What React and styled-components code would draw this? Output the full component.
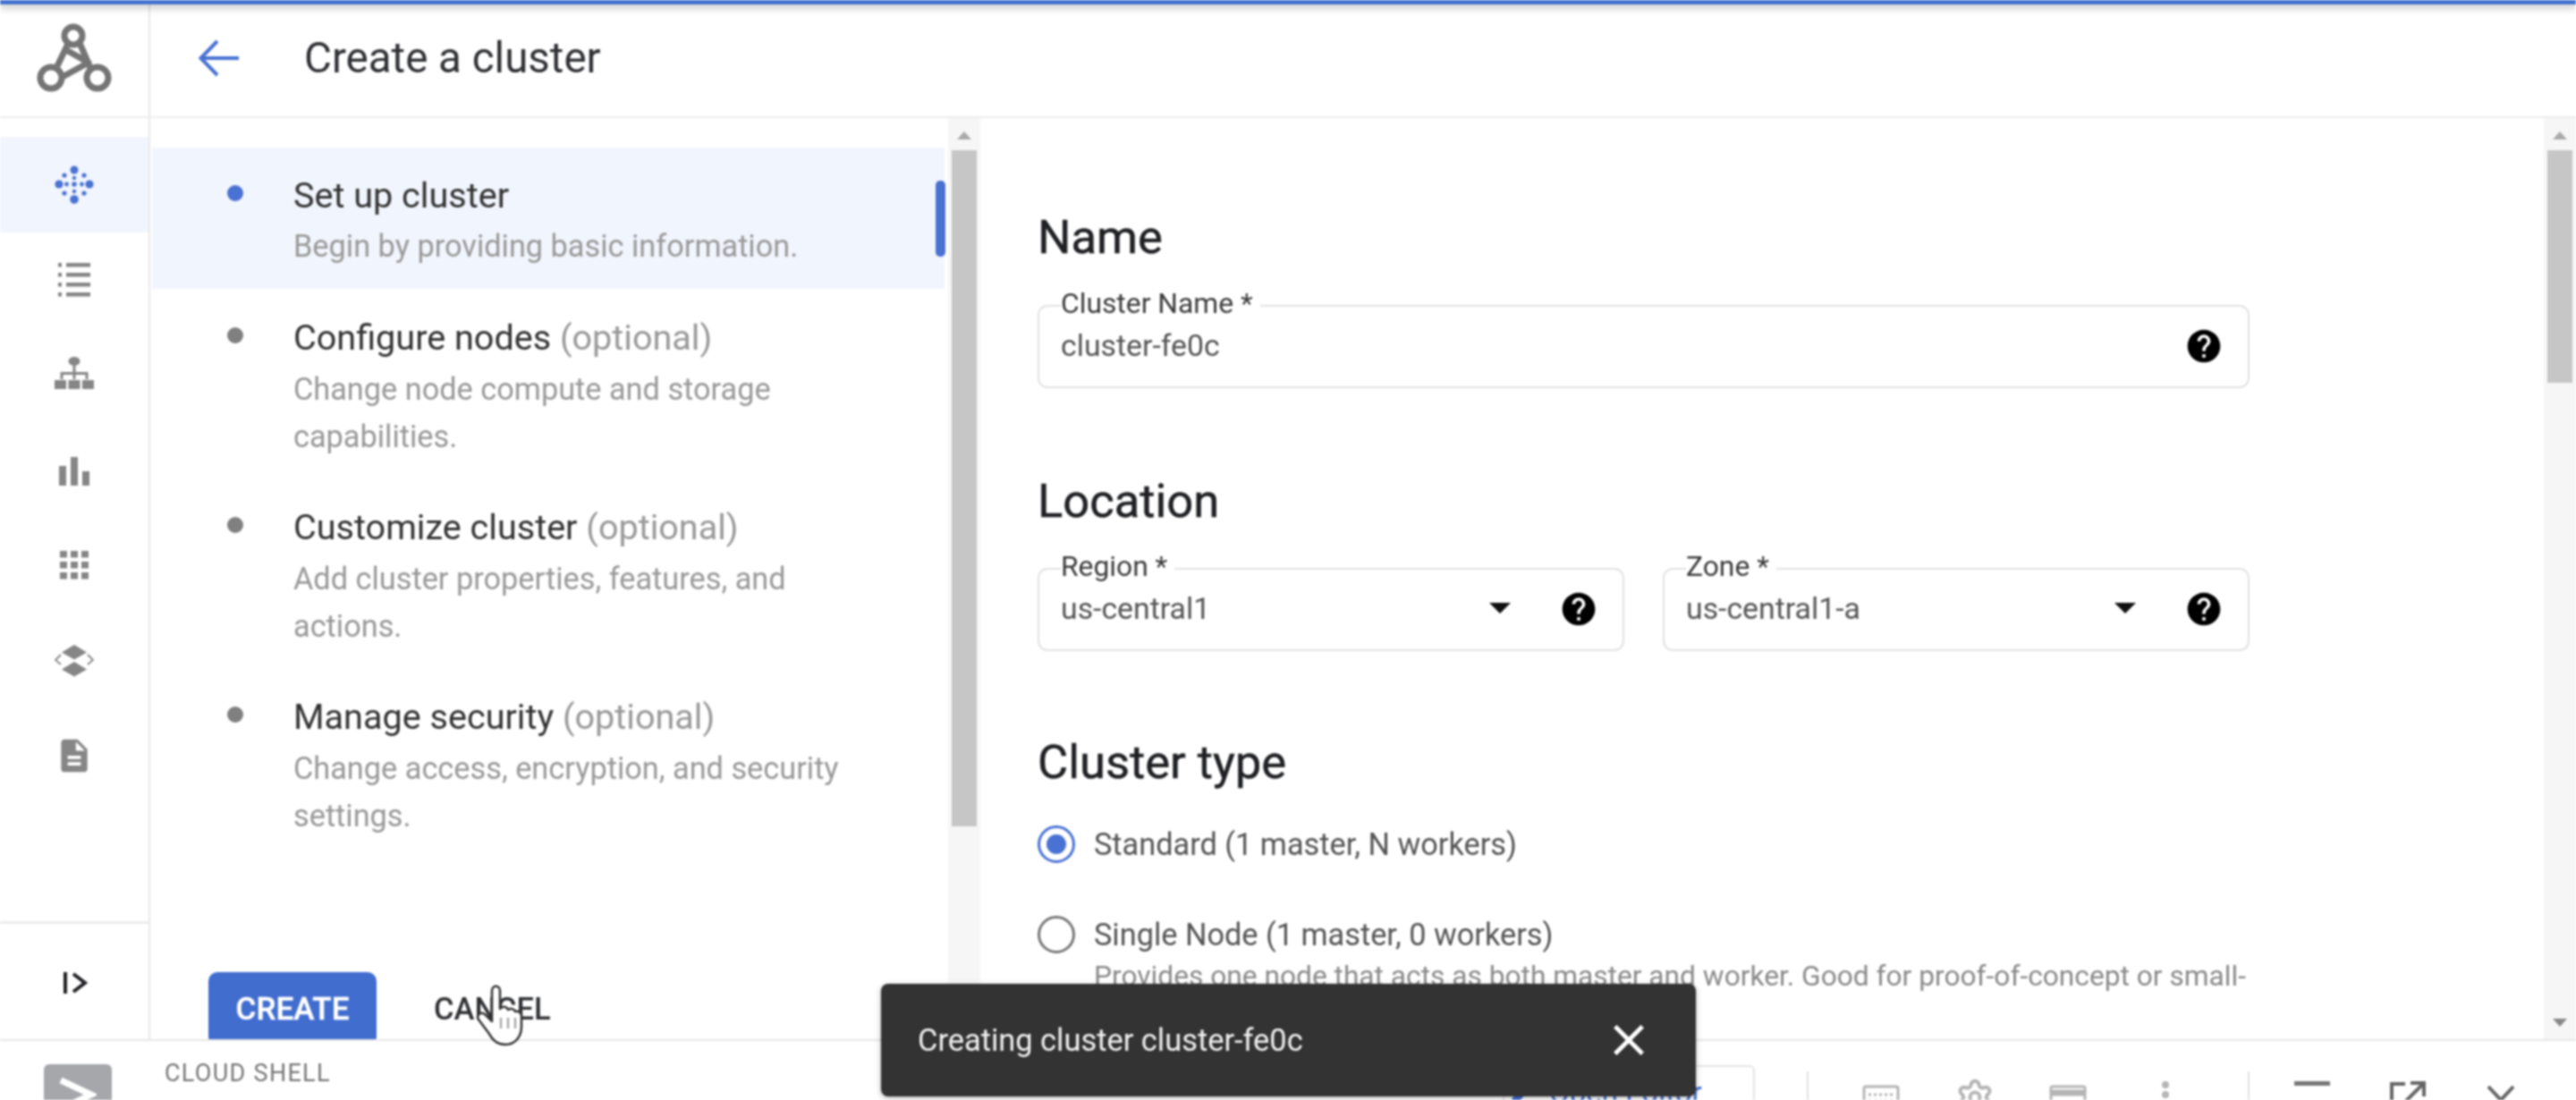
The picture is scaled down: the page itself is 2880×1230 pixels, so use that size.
import React from 'react';
import styled, { createGlobalStyle } from 'styled-components';
import { Settings } from 'lucide-react';

const Global = createGlobalStyle`
  html, body { margin: 0; padding: 0; background: #fff; overflow: hidden; }
  * { box-sizing: border-box; }
`;
const Page = styled.div`
  position: relative; width: 2880px; height: 1230px; overflow: hidden;
  display: flex; flex-direction: column; background: #fff;
  font-family: Roboto, "Liberation Sans", sans-serif; color: #202124;
  filter: blur(0.9px);
`;
const TopLine = styled.div`
  position: absolute; left: 0; right: 0; top: 0; height: 5px; background: #4472d0;
  box-shadow: 0 3px 8px rgba(0,0,0,.32); z-index: 3;
`;
const Header = styled.header`
  flex: none; height: 132px; display: flex; align-items: center; border-bottom: 2px solid #ececec;
`;
const LogoCell = styled.div`
  width: 168px; height: 100%; display: flex; align-items: center; justify-content: center;
  border-right: 2px solid #e8e8e8;
`;
const BackIcon = styled.svg`
  width: 48px; height: 48px; margin-left: 53px; margin-right: 71px; color: #4a72d3;
`;
const Title = styled.h1`
  margin: 0; font-size: 47.5px; font-weight: 400; color: #303134; line-height: 60px;
`;
const Main = styled.main`
  flex: none; height: 1030px; display: flex; overflow: hidden;
`;
const Rail = styled.nav`
  flex: none; width: 168px; border-right: 2px solid #e8e8e8; display: flex; flex-direction: column; padding-top: 21px;
`;
const RailItem = styled.div`
  height: 106.5px; display: flex; align-items: center; justify-content: center;
  color: ${p => (p.$active ? '#4a72d3' : '#868686')};
  background: ${p => (p.$active ? '#f1f5fd' : 'transparent')};
  svg { width: 44px; height: 44px; fill: currentColor; }
`;
const RailFoot = styled.div`
  margin-top: auto; height: 132px; border-top: 3px solid #ececec; display: flex; align-items: center; justify-content: center;
  padding-top: 2px;
  svg { width: 36px; height: 36px; }
`;
const StepsPane = styled.section`
  flex: none; width: 892px; display: flex; flex-direction: column; padding-top: 33px;
`;
const Step = styled.div`
  position: relative; display: flex; min-height: ${p => (p.$active ? 158 : 212)}px;
  padding: ${p => (p.$active ? 32 : 33)}px 20px 0 84px; margin-right: 4px; margin-left: 2px;
  background: ${p => (p.$active ? '#f1f5fd' : 'transparent')};
`;
const Dot = styled.span`
  flex: none; width: 18px; height: 18px; border-radius: 50%; margin-top: 10px; margin-right: 56px;
  background: ${p => (p.$active ? '#4a72d3' : '#808080')};
`;
const StepText = styled.div`min-width: 0; width: 650px;`;
const StepTitle = styled.div`
  font-size: 39.6px; line-height: 44px; color: #333;
`;
const Optional = styled.span`color: #999;`;
const StepSub = styled.div`
  margin-top: ${p => (p.$active ? 8 : 9)}px; font-size: 34.3px; line-height: 53px; color: #999;
`;
const ActiveBar = styled.span`
  position: absolute; right: -1px; top: 37px; width: 11px; height: 85px; border-radius: 5px; background: #4a72d3;
`;
const Actions = styled.div`
  margin-top: auto; height: 75px; overflow: hidden; display: flex; padding-left: 65px; flex: none;
`;
const Primary = styled.button`
  width: 188px; height: 82px; border: 0; border-radius: 10px; background: #416dcf; color: #fff;
  font: 500 35px Roboto, sans-serif; -webkit-text-stroke: .4px #fff;
`;
const Ghost = styled.button`
  margin-left: 64px; height: 82px; border: 0; padding: 0; background: none; color: #303134;
  font: 500 34.5px Roboto, sans-serif;
`;
const Track = styled.div`
  position: relative; flex: none; width: 36px; background: #f6f6f6; padding: 36px 4px 0;
`;
const ArrowUp = styled.span`
  position: absolute; top: 15px; left: 10px; border: 8px solid transparent; border-top: 0; border-bottom: 9px solid #aaa;
`;
const ArrowDown = styled.span`
  position: absolute; bottom: 14px; left: 10px; border: 8px solid transparent; border-bottom: 0; border-top: 9px solid #888;
`;
const Thumb = styled.div`
  height: ${p => p.$h}px; background: #c6c6c6;
`;
const FormPane = styled.section`
  flex: 1; min-width: 0; padding: 103px 0 0 64px; overflow: hidden;
`;
const Form = styled.div`width: 1355px;`;
const Heading = styled.h2`
  margin: ${p => p.$mt || 0}px 0 0; font-size: 52.5px; line-height: 60px; font-weight: 400; color: #202124;
  -webkit-text-stroke: .5px #202124;
`;
const Fields = styled.div`display: flex; gap: 43px; margin-top: 28px;`;
const Field = styled.fieldset`
  flex: 1; margin: ${p => p.$mt || 0}px 0 0; min-width: 0; height: 110px; padding: 0 27px 0 24px;
  border: 2px solid #e2e2e2; border-radius: 11px;
`;
const Legend = styled.legend`
  padding: 0 8px 6px 0; margin-left: 0; font-size: 31.8px; line-height: 30px; color: #3c3c3c;
`;
const FieldRow = styled.div`
  height: 52px; display: flex; align-items: center; font-size: 33.8px; color: #555;
`;
const Value = styled.span`flex: 1;`;
const Caret = styled.span`
  width: 0; height: 0; margin-right: 54px; border: 12px solid transparent; border-bottom: 0; border-top: 12px solid #111;
`;
const Help = styled.svg`width: 44px; height: 44px; fill: #000; flex: none; margin-top: 2px;`;
const RadioRow = styled.div`
  display: flex; align-items: center; height: 50px; margin-top: ${p => p.$mt}px; font-size: 34.3px; color: #555; gap: 21px;
`;
const Radio = styled.span`
  flex: none; width: 42px; height: 42px; border-radius: 50%; display: flex; align-items: center; justify-content: center;
  border: 3px solid ${p => (p.$on ? '#4a72d3' : '#777')};
  &::after { content: ''; width: 22px; height: 22px; border-radius: 50%; background: ${p => (p.$on ? '#4a72d3' : 'transparent')}; }
`;
const Desc = styled.div`
  margin: 0 0 0 63px; font-size: 31.7px; line-height: 44px; color: #8a8a8a; white-space: nowrap;
`;
const Shell = styled.footer`
  flex: none; height: 68px; border-top: 2px solid #e6e6e6; display: flex; overflow: hidden; position: relative;
`;
const ShellBadge = styled.div`
  flex: none; width: 76px; height: 80px; margin: 26px 0 0 49px; border-radius: 6px; background: #a5a7ab;
  display: flex; align-items: flex-start; justify-content: center; padding-top: 14px;
  svg { width: 42px; height: 56px; }
`;
const ShellLabel = styled.div`
  margin: 21px 0 0 59px; font-size: 27px; line-height: 30px; letter-spacing: 1.3px; color: #777;
`;
const ShellTools = styled.div`
  margin-left: auto; display: flex; align-items: flex-start; height: 100%;
`;
const EditorBtn = styled.div`
  width: 282px; height: 90px; margin-top: 27px; border: 2px solid #e4e4e4; border-radius: 6px;
  display: flex; align-items: flex-start; padding: 9px 0 0 4px; gap: 10px; color: #3f6fd0; font-size: 33px; white-space: nowrap;
`;
const VDivider = styled.span`flex: none; width: 2px; height: 60px; margin-top: 34px; background: #e2e2e2; margin-left: ${p => p.$ml}px;`;
const ToolIcon = styled.span`
  flex: none; width: 44px; height: 44px; margin-top: ${p => p.$mt}px; margin-left: ${p => p.$ml}px; color: ${p => p.$c || '#b5b5b5'};
  svg { width: 44px; height: 44px; display: block; }
`;
const Snackbar = styled.div`
  position: absolute; left: 985px; top: 1100px; width: 911px; height: 126px; border-radius: 8px; background: #333;
  color: #f1f1f1; font-size: 34.4px; display: flex; align-items: center; justify-content: space-between; padding: 0 46px 0 41px; z-index: 4;
  box-shadow: 0 2px 6px rgba(0,0,0,.3);
  svg { width: 58px; height: 58px; fill: #fff; }
`;
const Cursor = styled.svg`
  position: absolute; left: 526px; top: 1098px; width: 64px; height: 74px; z-index: 3;
`;

const HelpI = () => (
  <Help viewBox="0 0 24 24"><path d="M12 2C6.48 2 2 6.48 2 12s4.48 10 10 10 10-4.48 10-10S17.52 2 12 2zm1 17h-2v-2h2v2zm2.07-7.75l-.9.92C13.45 12.9 13 13.5 13 15h-2v-.5c0-1.1.45-2.1 1.17-2.83l1.24-1.26c.37-.36.59-.86.59-1.41 0-1.1-.9-2-2-2s-2 .9-2 2H8c0-2.21 1.79-4 4-4s4 1.79 4 4c0 .88-.36 1.68-.93 2.25z" /></Help>
);
const Logo = () => (
  <svg width="86" height="80" viewBox="0 0 86 80" fill="none" stroke="#757575" strokeWidth="7">
    <circle cx="42" cy="15" r="10" />
    <circle cx="17" cy="62" r="12" />
    <circle cx="69" cy="62" r="12" />
    <path d="M36 24L23 51M49 23L61 51M36 32L59 45L28 62" strokeLinejoin="round" />
  </svg>
);
const NodesI = () => (
  <svg viewBox="0 0 44 44">
    {[[22,6,4.5],[22,39,4.8],[5,22,4.6],[39,22,4.6],[22,22,2.8],[11,12,2.6],[33,12,2.6],[11,32,2.6],[33,32,2.6],[22,15,2.200],[22,30,2.200],[13.500,22,2.400],[30.500,22,2.400]].map(([x,y,r],i)=>(
      <circle key={i} cx={x} cy={y} r={r} />
    ))}
  </svg>
);
const ListI = () => (
  <svg viewBox="0 0 44 44">
    {[5,16,27,38].map(y => (
      <g key={y}><rect x="4" y={y - 2} width="4" height="4.500" /><rect x="13" y={y - 2} width="27" height="4.500" /></g>
    ))}
  </svg>
);
const TreeI = () => (
  <svg viewBox="0 0 44 44">
    <ellipse cx="22" cy="7" rx="6.500" ry="5" />
    <path d="M20.500 10h3v9h14v8h-3v-5H23.500v5h-3v-5H9.500v5h-3v-8h14z" />
    <rect x="0" y="28" width="13" height="10" /><rect x="15.500" y="28" width="13" height="10" /><rect x="31" y="28" width="13" height="10" />
  </svg>
);
const BarsI = () => (
  <svg viewBox="0 0 44 44"><rect x="5" y="17" width="8" height="22" /><rect x="18" y="7" width="8" height="32" /><rect x="31" y="23" width="8" height="16" /></svg>
);
const AppsI = () => (
  <svg viewBox="0 0 44 44">
    {[6,18,30].flatMap(y => [6,18,30].map(x => <rect key={`${x}${y}`} x={x} y={y} width="8" height="7.500" />))}
  </svg>
);
const LayersI = () => (
  <svg viewBox="0 0 44 44">
    <path d="M22 4l14 8.500-14 8-14-8z" />
    <path d="M22 23l14 8.500-14 8-14-8z" />
    <path d="M7 15l-6 6 6 5M37 15l6 6-6 5" fill="none" stroke="currentColor" strokeWidth="1.800" />
  </svg>
);
const DocI = () => (<svg viewBox="0 0 24 24"><path d="M14 2H6c-1.100 0-1.990.9-1.990 2L4 20c0 1.100.89 2 1.990 2H18c1.100 0 2-.9 2-2V8l-6-6zm2 16H8v-2h8v2zm0-4H8v-2h8v2zm-3-5V3.500L18.500 9H13z" /></svg>);
const CloseP = "M19 6.410L17.590 5 12 10.590 6.410 5 5 6.410 10.590 12 5 17.590 6.410 19 12 13.410 17.590 19 19 17.590 13.410 12z";

export default function App() {
  return (
    <Page>
      <Global />
      <TopLine />
      <Header>
        <LogoCell><Logo /></LogoCell>
        <BackIcon viewBox="0 0 48 48" fill="none" stroke="currentColor" strokeWidth="4">
          <path d="M46 24H4M22 5L3.500 24 22 43" />
        </BackIcon>
        <Title>Create a cluster</Title>
      </Header>
      <Main>
        <Rail>
          <RailItem $active><NodesI /></RailItem>
          <RailItem><ListI /></RailItem>
          <RailItem><TreeI /></RailItem>
          <RailItem><BarsI /></RailItem>
          <RailItem><AppsI /></RailItem>
          <RailItem><LayersI /></RailItem>
          <RailItem><DocI /></RailItem>
          <RailFoot>
            <svg viewBox="0 0 36 36" fill="none" stroke="#202124" strokeWidth="4">
              <path d="M8 6v24M17 8l13 10-13 10" />
            </svg>
          </RailFoot>
        </Rail>
        <StepsPane>
          <Step $active>
            <Dot $active />
            <StepText>
              <StepTitle>Set up cluster</StepTitle>
              <StepSub $active>Begin by providing basic information.</StepSub>
            </StepText>
            <ActiveBar />
          </Step>
          <Step>
            <Dot />
            <StepText>
              <StepTitle>Configure nodes <Optional>(optional)</Optional></StepTitle>
              <StepSub>Change node compute and storage capabilities.</StepSub>
            </StepText>
          </Step>
          <Step>
            <Dot />
            <StepText>
              <StepTitle>Customize cluster <Optional>(optional)</Optional></StepTitle>
              <StepSub>Add cluster properties, features, and actions.</StepSub>
            </StepText>
          </Step>
          <Step>
            <Dot />
            <StepText>
              <StepTitle>Manage security <Optional>(optional)</Optional></StepTitle>
              <StepSub>Change access, encryption, and security settings.</StepSub>
            </StepText>
          </Step>
          <Actions>
            <Primary>CREATE</Primary>
            <Ghost>CANCEL</Ghost>
          </Actions>
        </StepsPane>
        <Track><ArrowUp /><Thumb $h={756} /></Track>
        <FormPane>
          <Form>
            <Heading>Name</Heading>
            <Field $mt={29}>
              <Legend>Cluster Name *</Legend>
              <FieldRow><Value>cluster-fe0c</Value><HelpI /></FieldRow>
            </Field>
            <Heading $mt={96}>Location</Heading>
            <Fields>
              <Field>
                <Legend>Region *</Legend>
                <FieldRow><Value>us-central1</Value><Caret /><HelpI /></FieldRow>
              </Field>
              <Field>
                <Legend>Zone *</Legend>
                <FieldRow><Value>us-central1-a</Value><Caret /><HelpI /></FieldRow>
              </Field>
            </Fields>
            <Heading $mt={94}>Cluster type</Heading>
            <RadioRow $mt={37}><Radio $on />Standard (1 master, N workers)</RadioRow>
            <RadioRow $mt={51}><Radio />Single Node (1 master, 0 workers)</RadioRow>
            <Desc>Provides one node that acts as both master and worker. Good for proof-of-concept or small-</Desc>
          </Form>
        </FormPane>
        <Track><ArrowUp /><Thumb $h={260} /><ArrowDown /></Track>
      </Main>
      <Shell>
        <ShellBadge>
          <svg viewBox="0 0 42 56" fill="none" stroke="#fff" strokeWidth="7">
            <path d="M2 4l34 16L2 36M6 50h34" />
          </svg>
        </ShellBadge>
        <ShellLabel>CLOUD SHELL</ShellLabel>
        <ShellTools>
          <EditorBtn>
            <svg width="36" height="36" viewBox="0 0 24 24" fill="#3f6fd0"><path d="M3 17.250V21h3.750L17.810 9.940l-3.750-3.750L3 17.250zM20.710 7.040a1 1 0 000-1.410l-2.340-2.340a1 1 0 00-1.410 0l-1.830 1.830 3.750 3.750 1.830-1.830z" /></svg>
            Open Editor
          </EditorBtn>
          <VDivider $ml={58} />
          <ToolIcon $mt={48} $ml={59}>
            <svg viewBox="0 0 44 44" fill="none" stroke="currentColor" strokeWidth="3"><rect x="3" y="3" width="38" height="30" rx="2" /><path d="M8 12h28M8 19h28" strokeDasharray="3 3" /></svg>
          </ToolIcon>
          <ToolIcon $mt={41} $ml={61}><Settings size={44} strokeWidth={2.2} /></ToolIcon>
          <ToolIcon $mt={48} $ml={60}>
            <svg viewBox="0 0 44 44" fill="none" stroke="currentColor" strokeWidth="3"><rect x="3" y="3" width="38" height="36" rx="2" /><path d="M3 10h38" strokeWidth="7" /><path d="M15 30l7-8 7 8" /></svg>
          </ToolIcon>
          <ToolIcon $mt={44} $ml={65}>
            <svg viewBox="0 0 44 44" fill="currentColor"><circle cx="22" cy="5" r="4" /><circle cx="22" cy="16" r="4" /><circle cx="22" cy="27" r="4" /></svg>
          </ToolIcon>
          <VDivider $ml={70} />
          <ToolIcon $mt={44} $ml={48} $c="#777">
            <svg viewBox="0 0 44 44"><rect x="2" y="1" width="40" height="5" fill="currentColor" /></svg>
          </ToolIcon>
          <ToolIcon $mt={44} $ml={62} $c="#666">
            <svg viewBox="0 0 44 44" fill="none" stroke="currentColor" strokeWidth="4"><path d="M20 4H5v36h34V24M26 3h15v15M41 3L18 26" /></svg>
          </ToolIcon>
          <ToolIcon $mt={49} $ml={61} $c="#666">
            <svg viewBox="0 0 44 44" fill="none" stroke="currentColor" strokeWidth="4"><path d="M8 2l28 30M36 2L8 32" /></svg>
          </ToolIcon>
          <ToolIcon $mt={49} $ml={18} $c="transparent" />
        </ShellTools>
      </Shell>
      <Snackbar>
        Creating cluster cluster-fe0c
        <svg viewBox="0 0 24 24"><path d={CloseP} /></svg>
      </Snackbar>
      <Cursor viewBox="0 0 64 74">
        <path d="M24 38V10c0-7 9-7 9 0v20c2-3 8-3 9 1 3-2 7-1 8 2 3-1 7 1 7 5v12c0 10-6 20-18 20-9 0-14-4-18-12L9 42c-3-5 3-10 8-5l7 7z" fill="#fff" stroke="#333" strokeWidth="2.500" strokeLinejoin="round" />
        <path d="M34 40v12M42 40v12M50 40v12" stroke="#777" strokeWidth="1.500" />
      </Cursor>
    </Page>
  );
}
